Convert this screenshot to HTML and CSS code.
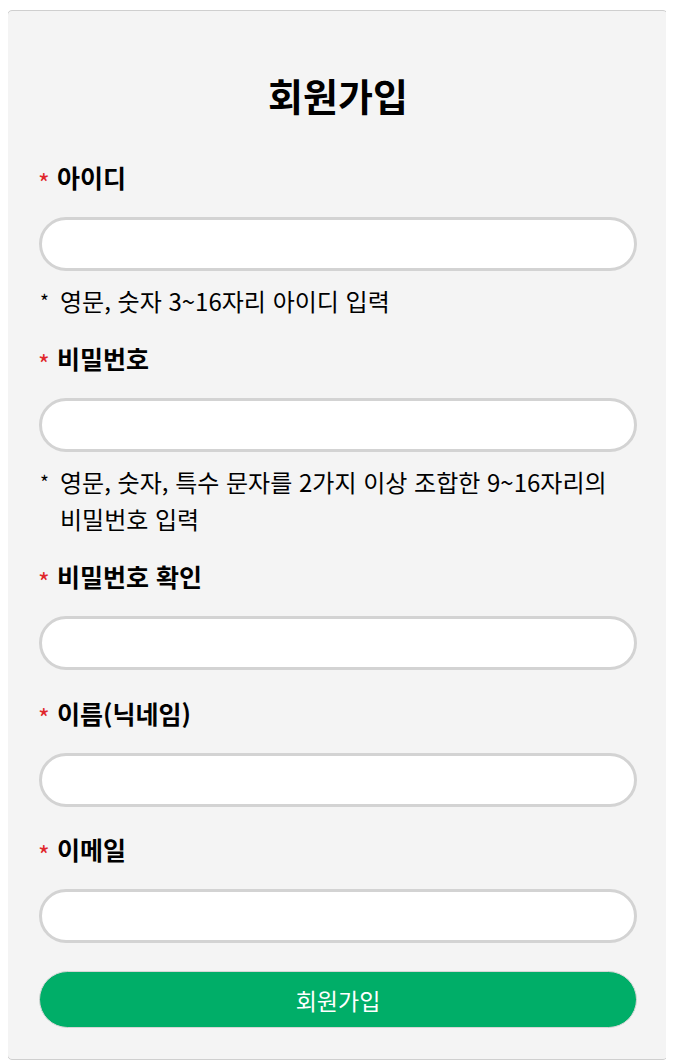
FILE: index.html
```html
<!DOCTYPE html>
<html lang="ko">
<head>
<meta charset="utf-8">
<title>회원가입</title>
<link rel="stylesheet" href="styles.css">
</head>
<body>
<form class="card">
  <h1 class="title">회원가입</h1>

  <div class="field">
    <label class="label"><span class="req">*</span>아이디</label>
    <input class="input" type="text">
    <p class="hint"><span class="mark">*</span><span>영문, 숫자 3~16자리 아이디 입력</span></p>
  </div>

  <div class="field">
    <label class="label"><span class="req">*</span>비밀번호</label>
    <input class="input" type="password">
    <p class="hint"><span class="mark">*</span><span>영문, 숫자, 특수 문자를 2가지 이상 조합한 9~16자리의 비밀번호 입력</span></p>
  </div>

  <div class="field">
    <label class="label"><span class="req">*</span>비밀번호 확인</label>
    <input class="input" type="password">
  </div>

  <div class="field">
    <label class="label"><span class="req">*</span>이름(닉네임)</label>
    <input class="input" type="text">
  </div>

  <div class="field">
    <label class="label"><span class="req">*</span>이메일</label>
    <input class="input" type="email">
  </div>

  <button class="submit" type="button">회원가입</button>
</form>
</body>
</html>
```
FILE: styles.css
```css
* { box-sizing: border-box; }

body {
  margin: 8px;
  background: #ffffff;
  font-family: "Noto Sans CJK KR", "Noto Sans", sans-serif;
  color: #000;
}

.card {
  width: 661px;
  height: 1050px;
  margin: 2px 0 0 -1px;
  padding: 0 30px 30px 31px;
  background: #f4f4f4;
  border: 1px solid #cfcfcf;
  border-radius: 5px;
  display: flex;
  flex-direction: column;
}

.title {
  margin: 62px 0 0;
  font-size: 38px;
  line-height: 44px;
  font-weight: 700;
  text-align: center;
}

.field {
  display: flex;
  flex-direction: column;
  margin-top: 27.5px;
}

.field:first-of-type { margin-top: 45px; }

.label {
  display: flex;
  align-items: center;
  height: 30px;
  font-size: 25px;
  font-weight: 700;
  line-height: 30px;
}

.req {
  color: #e0262b;
  font-size: 25px;
  font-weight: 400;
  width: 19px;
  margin-left: -1px;
  margin-top: 9px;
}

.input {
  margin-top: 25px;
  width: 100%;
  height: 54px;
  flex: none;
  border: 3px solid #d3d3d3;
  border-radius: 27px;
  background: #fff;
  padding: 0 20px;
  font: inherit;
  font-size: 18px;
  outline: none;
}

.hint {
  display: flex;
  margin: 11px 0 -3.5px;
  font-size: 24px;
  line-height: 37px;
  word-break: keep-all;
}

.mark {
  flex: none;
  width: 21px;
  padding-left: 1px;
  font-size: 19px;
}

.submit {
  margin-top: 28px;
  width: 100%;
  height: 57px;
  flex: none;
  border: 1px solid #d6d6d6;
  border-radius: 29px;
  background: #00ae68;
  color: #fff;
  font-family: inherit;
  font-size: 23px;
}
```
